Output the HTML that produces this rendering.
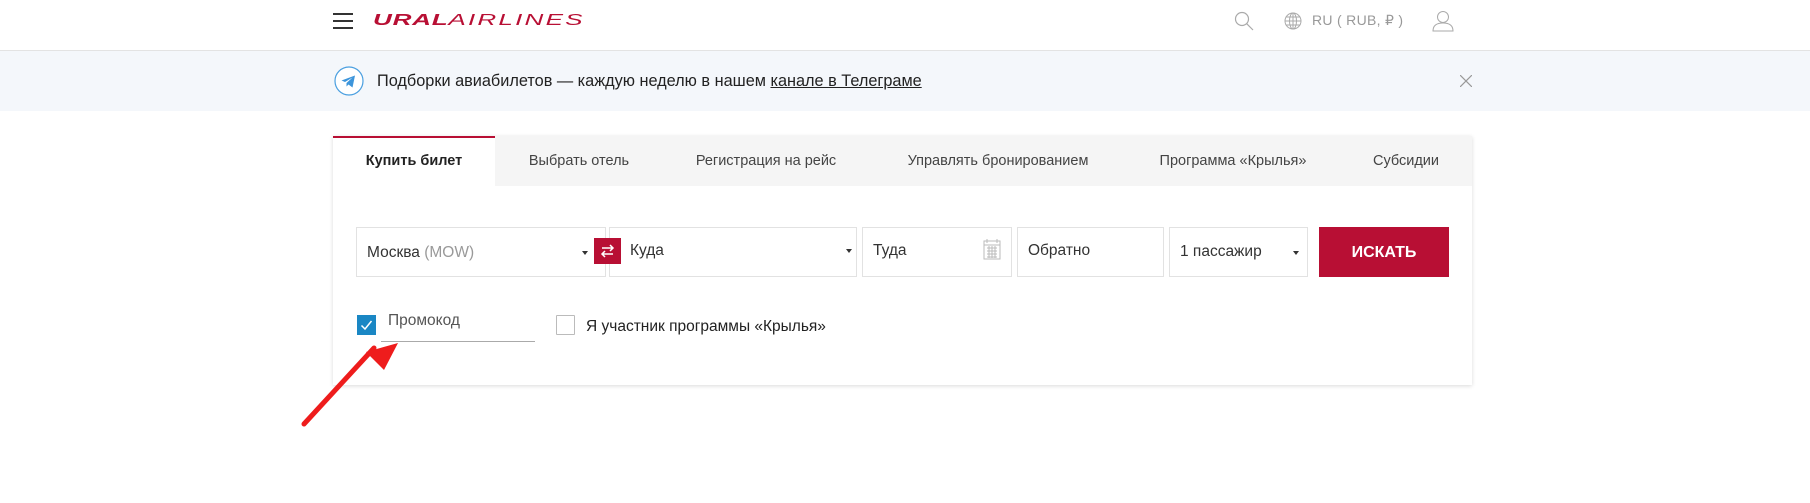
<!DOCTYPE html>
<html><head><meta charset="utf-8"><style>
*{margin:0;padding:0;box-sizing:border-box}
body{width:1810px;height:503px;background:#fff;font-family:"Liberation Sans",sans-serif;position:relative;overflow:hidden;color:#222}
.a{position:absolute}
.inp{position:absolute;top:227px;height:50px;border:1px solid #e2e2e2;background:#fff;font-size:15.5px;color:#333;padding:15px 10px 0 10px}
.tab{position:absolute;top:136px;height:50px;font-size:14.5px;color:#444;line-height:50px;text-align:center}
.tri{position:absolute;top:23px;width:0;height:0;border-left:3px solid transparent;border-right:3px solid transparent;border-top:4px solid #333}
</style></head><body>
<div class="a" style="left:333px;top:13px;width:20px;height:2px;background:#333"></div>
<div class="a" style="left:333px;top:20px;width:20px;height:2px;background:#333"></div>
<div class="a" style="left:333px;top:27px;width:20px;height:2px;background:#333"></div>
<div class="a" style="left:373px;top:10px;font-size:18px;font-style:italic;color:#b80f34;white-space:nowrap;transform:scale(1.45,0.85);transform-origin:0 50%"><b style="letter-spacing:0.5px">URAL</b><span style="font-weight:normal;letter-spacing:1.5px">AIRLINES</span></div>
<svg class="a" style="left:1234px;top:11px" width="20" height="20" viewBox="0 0 20 20" fill="none" stroke="#aaa" stroke-width="1.2"><circle cx="8" cy="8" r="6.5"/><path d="M12.7 12.7L19 19"/></svg>
<svg class="a" style="left:1284px;top:12px" width="18" height="18" viewBox="0 0 18 18" fill="none" stroke="#aaa" stroke-width="1"><circle cx="9" cy="9" r="8"/><ellipse cx="9" cy="9" rx="3.5" ry="8"/><path d="M1 9h16M2.5 5h13M2.5 13h13M9 1v16"/></svg>
<div class="a" style="left:1312px;top:12px;font-size:14px;color:#999;letter-spacing:0.3px">RU ( RUB, ₽ )</div>
<svg class="a" style="left:1432px;top:10px" width="22" height="22" viewBox="0 0 22 22" fill="none" stroke="#aaa" stroke-width="1"><circle cx="11" cy="7" r="5.5"/><path d="M1 21c0-6 4-8 10-8s10 2 10 8z"/></svg>
<div class="a" style="left:0;top:50px;width:1810px;height:1px;background:#e3e3e3"></div>
<div class="a" style="left:0;top:51px;width:1810px;height:60px;background:#f4f7fb"></div>
<svg class="a" style="left:334px;top:66px" width="30" height="30" viewBox="0 0 30 30"><circle cx="15" cy="15" r="14" fill="#fff" stroke="#4a9fe0" stroke-width="1.2"/><path d="M7.5 14.5L21 9.5l-2.5 12-4-3-2 2v-3.5l6-5.5-7.5 4.5z" fill="#3d95db"/></svg>
<div class="a" style="left:377px;top:72px;font-size:16.3px;color:#222;white-space:nowrap">Подборки авиабилетов — каждую неделю в нашем <span style="text-decoration:underline">канале в Телеграме</span></div>
<svg class="a" style="left:1460px;top:75px" width="12" height="12" viewBox="0 0 12 12" stroke="#999" stroke-width="1.2"><path d="M0 0L12 12M12 0L0 12"/></svg>
<div class="a" style="left:333px;top:136px;width:1139px;height:249px;background:#fff;box-shadow:0 1px 4px rgba(0,0,0,0.15)"></div>
<div class="a" style="left:495px;top:136px;width:977px;height:50px;background:#f5f5f5"></div>
<div class="a" style="left:333px;top:136px;width:162px;height:2px;background:#b80f34"></div>
<div class="tab" style="left:333px;width:162px;color:#222;font-weight:bold">Купить билет</div>
<div class="tab" style="left:500px;width:158px">Выбрать отель</div>
<div class="tab" style="left:670px;width:192px">Регистрация на рейс</div>
<div class="tab" style="left:878px;width:240px">Управлять бронированием</div>
<div class="tab" style="left:1130px;width:206px">Программа «Крылья»</div>
<div class="tab" style="left:1360px;width:92px">Субсидии</div>
<div class="inp" style="left:356px;width:250px;padding-top:16px">Москва <span style="color:#999">(MOW)</span><div class="tri" style="left:225px"></div></div>
<div class="inp" style="left:609px;width:248px;padding-left:20px;padding-top:14px">Куда<div class="tri" style="left:236px;top:21px"></div></div>
<div class="a" style="left:594px;top:238px;width:27px;height:26px;background:#b80f34"></div>
<svg class="a" style="left:598px;top:242px" width="19" height="18" viewBox="0 0 19 18" fill="none" stroke="#fff" stroke-width="1.5"><path d="M4 6h11M12 3l3 3-3 3M15 12H4M7 9l-3 3 3 3"/></svg>
<div class="inp" style="left:862px;width:150px;padding-top:14px">Туда
<svg style="position:absolute;left:120px;top:10px" width="18" height="22" viewBox="0 0 18 22" fill="none" stroke="#bbb" stroke-width="1"><rect x="1" y="3" width="16" height="18"/><path d="M1 7h16M4 1v4M14 1v4M4 10h10M4 13h10M4 16h10M4 19h10M6 8v12M9 8v12M12 8v12"/></svg></div>
<div class="inp" style="left:1017px;width:147px;padding-top:14px">Обратно</div>
<div class="inp" style="left:1169px;width:139px;padding-top:15px">1 пассажир<div class="tri" style="left:123px;top:23px"></div></div>
<div class="a" style="left:1319px;top:227px;width:130px;height:50px;background:#b80f34;color:#fff;font-weight:bold;font-size:16px;text-align:center;line-height:51px">ИСКАТЬ</div>
<div class="a" style="left:357px;top:315px;width:19px;height:20px;background:#1a87c4"></div>
<svg class="a" style="left:360px;top:319px" width="13" height="12" viewBox="0 0 13 12" fill="none" stroke="#fff" stroke-width="1.5"><path d="M1.5 6.5l3.5 3.5 6.5-8"/></svg>
<div class="a" style="left:388px;top:312px;font-size:15.5px;color:#555">Промокод</div>
<div class="a" style="left:381px;top:341px;width:154px;height:1px;background:#aaa"></div>
<div class="a" style="left:556px;top:315px;width:19px;height:20px;border:1px solid #bbb;border-radius:1px"></div>
<div class="a" style="left:586px;top:318px;font-size:15.5px;color:#222">Я участник программы «Крылья»</div>
<svg class="a" style="left:290px;top:330px" width="120" height="105" viewBox="0 0 120 105"><path d="M14 94L84 18" stroke="#ee1c1c" stroke-width="5" stroke-linecap="round"/><path d="M108 13L76 22 94 40z" fill="#ee1c1c"/></svg>
</body></html>
